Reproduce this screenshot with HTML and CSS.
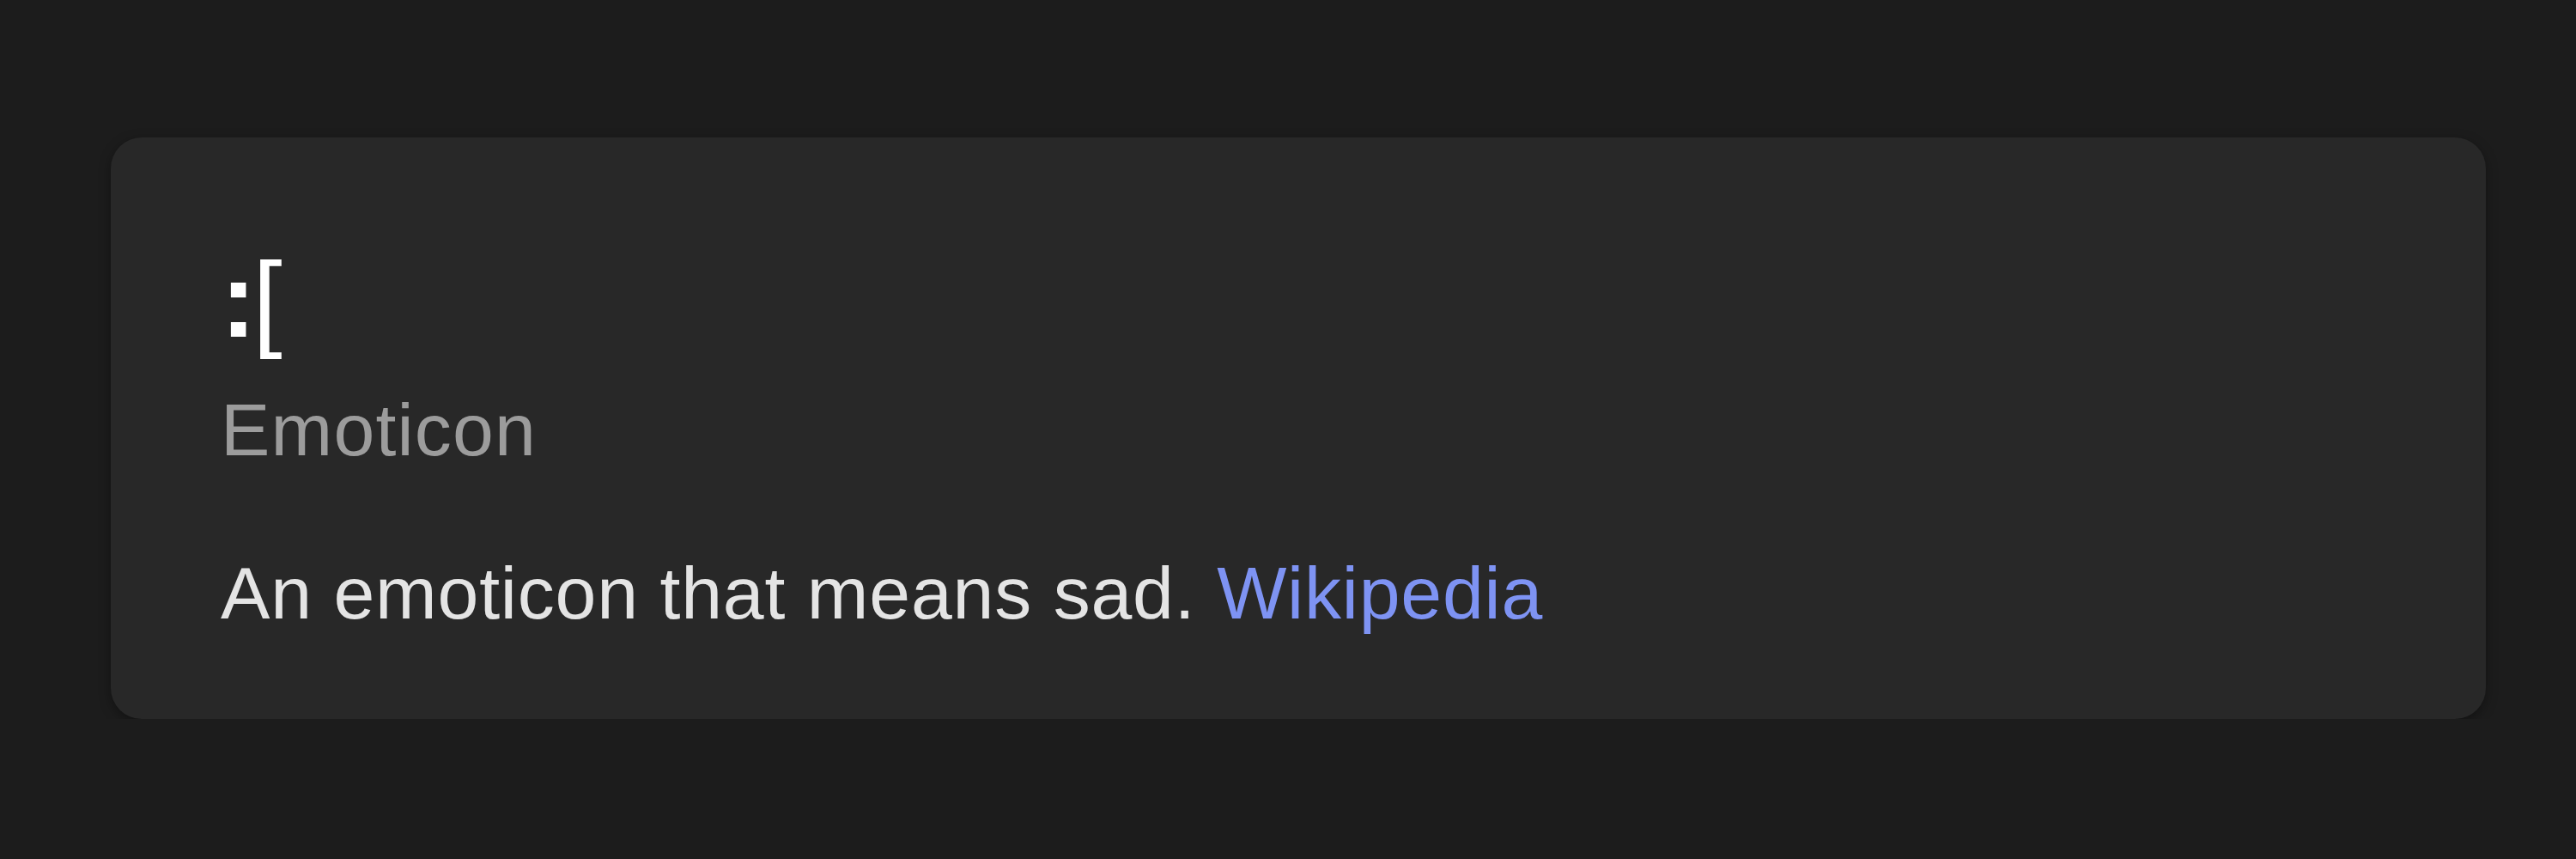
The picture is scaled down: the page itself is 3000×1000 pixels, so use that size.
FILE: index.html
```html
<!DOCTYPE html>
<html lang="en">
<head>
  <meta charset="UTF-8"/>
  <title>Emoticon</title>
  <link rel="stylesheet" href="styles.css">
</head>
<body>

  <!-- Knowledge card -->
  <div class="page">
    <div class="card">
      <div class="card-title"><span class="colon">:</span>[</div>
      <div class="card-subtitle">Emoticon</div>
      <p class="card-desc">An emoticon that means sad. <a href="#">Wikipedia</a></p>
    </div>
  </div>

</body>
</html>
```

FILE: styles.css
```css
body {
  font-family: 'Liberation Sans', Arial, sans-serif;
  margin: 0;
  padding: 0;
  background-color: #1c1c1c;
}

.page {
  padding: 160px 100px 0 129px;
}

.card {
  width: 2766px;
  box-sizing: border-box;
  background-color: #282828;
  border-radius: 36px;
  padding: 119px 128px 97px;
  box-shadow: 0 4px 14px rgba(0,0,0,0.35);
}

.card-title {
  color: #ffffff;
  font-size: 124px;
  line-height: 140px;
}

.card-title .colon {
  font-weight: bold;
  margin-right: -4px;
}

.card-subtitle {
  margin-top: 31px;
  color: #9c9c9c;
  font-size: 86px;
  line-height: 100px;
  letter-spacing: 1.2px;
}

.card-desc {
  margin: 90px 0 0;
  color: #e4e4e4;
  font-size: 86px;
  line-height: 100px;
  letter-spacing: 0.8px;
}

.card-desc a {
  color: #7e93f3;
  text-decoration: none;
}
```
